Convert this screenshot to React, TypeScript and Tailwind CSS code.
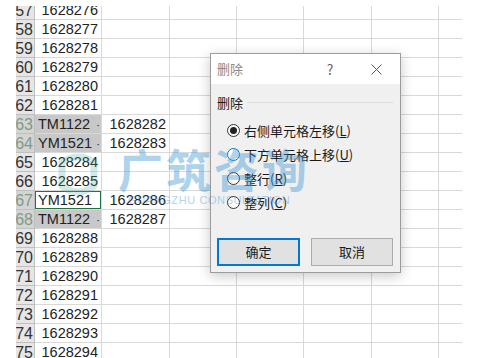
import clsx from "clsx";

type RowData = {
  n: number;
  a: string;
  b?: string;
  kind?: "gray" | "active";
};

const rows: RowData[] = [
  { n: 57, a: "1628276" },
  { n: 58, a: "1628277" },
  { n: 59, a: "1628278" },
  { n: 60, a: "1628279" },
  { n: 61, a: "1628280" },
  { n: 62, a: "1628281" },
  { n: 63, a: "TM1122", b: "1628282", kind: "gray" },
  { n: 64, a: "YM1521", b: "1628283", kind: "gray" },
  { n: 65, a: "1628284" },
  { n: 66, a: "1628285" },
  { n: 67, a: "YM1521", b: "1628286", kind: "active" },
  { n: 68, a: "TM1122", b: "1628287", kind: "gray" },
  { n: 69, a: "1628288" },
  { n: 70, a: "1628289" },
  { n: 71, a: "1628290" },
  { n: 72, a: "1628291" },
  { n: 73, a: "1628292" },
  { n: 74, a: "1628293" },
  { n: 75, a: "1628294" },
];

function SheetRow({ r }: { r: RowData }) {
  const marked = !!r.kind;
  const cell = "h-[19px] shrink-0 border-r border-b border-[#d9d9d9]";
  return (
    <div className="flex h-[19px]">
      {/* row header, clipped at the left */}
      <div
        className={clsx(
          "w-[19px] h-[19px] shrink-0 overflow-hidden flex items-center justify-end pr-[1px] pt-[2px] border-r border-b border-[#bfbfbf] text-[16px] whitespace-nowrap",
          marked ? "bg-[#d4d4d4] text-[#7f9b88]" : "bg-[#e6e6e6] text-[#333]"
        )}
      >
        {r.n}
      </div>

      {/* column A */}
      {r.kind ? (
        <div
          className={clsx(
            cell,
            "w-[67px] flex items-center pl-[3px] pr-[1px] pt-[2px]",
            r.kind === "gray" && "bg-[#c8c8c8]",
            r.kind === "active" && "ring-1 ring-inset ring-[#217346]"
          )}
        >
          <span>{r.a}</span>
          {r.kind === "gray" && <span className="ml-auto text-[11px] leading-none">·</span>}
        </div>
      ) : (
        <div className={clsx(cell, "w-[67px] flex items-center justify-end pr-[3px] pt-[2px]")}>
          {r.a}
        </div>
      )}

      {/* column B */}
      <div className={clsx(cell, "w-[68px] flex items-center justify-end pr-[3px] pt-[2px]")}>
        {r.b}
      </div>

      <div className={clsx(cell, "w-[67px]")} />
      <div className={clsx(cell, "w-[67px]")} />
      <div className={clsx(cell, "w-[68px]")} />
      <div className={clsx(cell, "w-[67px]")} />
      <div className="h-[19px] w-[23px] shrink-0 border-b border-[#d9d9d9]" />
    </div>
  );
}

function Radio({
  label,
  hotkey,
  checked,
  focus,
}: {
  label: string;
  hotkey: string;
  checked?: boolean;
  focus?: boolean;
}) {
  return (
    <div className="flex items-center h-[24px] gap-[4px]">
      <span
        className={clsx(
          "w-[13px] h-[13px] rounded-full border bg-white flex items-center justify-center shrink-0",
          focus ? "border-[#0078d7]" : "border-[#333]"
        )}
      >
        {checked && <span className="w-[7px] h-[7px] rounded-full bg-[#222]" />}
      </span>
      <span className="text-[13px] leading-none text-[#1a1a1a] whitespace-nowrap">
        {label}(<u>{hotkey}</u>)
      </span>
    </div>
  );
}

function DeleteDialog() {
  return (
    <div className="absolute left-[210px] top-[53px] w-[191px] h-[220px] flex flex-col border border-[#9c9c9c] bg-[#f0f0f0] shadow-[0_3px_12px_rgba(0,0,0,0.22)] font-['Noto_Sans_CJK_SC',sans-serif]">
      {/* Title bar */}
      <div className="h-[30px] bg-white flex items-center pl-[6px] pr-[1px]">
        <span className="text-[13px] text-[#8a8a8a]">删除</span>
        <span className="ml-auto w-[46px] h-[30px] flex items-center justify-center text-[14px] text-[#666]">
          ?
        </span>
        <span className="w-[46px] h-[30px] flex items-center justify-center">
          <svg width="11" height="11" viewBox="0 0 11 11" fill="none" stroke="#555" strokeWidth="1">
            <path d="M0.5 0.5L10.5 10.5M10.5 0.5L0.5 10.5" />
          </svg>
        </span>
      </div>

      {/* Body */}
      <div className="flex-1 pt-[10px] pl-[6px] pr-[7px]">
        <div className="flex items-center h-[16px] gap-[4px]">
          <span className="text-[13px] leading-none text-[#1a1a1a]">删除</span>
          <span className="flex-1 h-px bg-[#dcdcdc]" />
        </div>

        <div className="mt-[8px] pl-[10px]">
          <Radio label="右侧单元格左移" hotkey="L" checked />
          <Radio label="下方单元格上移" hotkey="U" focus />
          <Radio label="整行" hotkey="R" />
          <Radio label="整列" hotkey="C" />
        </div>

        <div className="mt-[24px] flex gap-[11px]">
          <button className="w-[83px] h-[28px] border-2 border-[#0078d7] bg-[#e1e1e1] text-[13px] text-[#1a1a1a]">
            确定
          </button>
          <button className="w-[82px] h-[28px] border border-[#adadad] bg-[#e1e1e1] text-[13px] text-[#1a1a1a]">
            取消
          </button>
        </div>
      </div>
    </div>
  );
}

function Watermark() {
  return (
    <div className="pointer-events-none absolute inset-0">
      <svg
        className="absolute left-[54px] top-[150px] opacity-[0.25]"
        width="48"
        height="50"
        viewBox="0 0 48 50"
        fill="none"
      >
        <path
          d="M8 12 Q24 2 40 12 L40 36 Q24 48 8 36 Z"
          stroke="#4fae9a"
          strokeWidth="7"
          strokeLinejoin="round"
        />
      </svg>
      <div className="absolute left-[118px] top-[146px] text-[45px] leading-none font-bold tracking-[3px] text-[#3d97d6] opacity-[0.42] font-['Noto_Sans_CJK_SC',sans-serif] whitespace-nowrap">
        广筑咨询
      </div>
      <div className="absolute left-[128px] top-[195px] text-[11px] leading-none tracking-[0.6px] text-[#3d97d6] opacity-[0.4] font-['Liberation_Sans',sans-serif] whitespace-nowrap">
        GUANGZHU CONSULTATION
      </div>
    </div>
  );
}

export default function App() {
  return (
    <div className="relative w-[480px] h-[358px] overflow-hidden bg-white text-[#222] text-[14.5px] font-['Liberation_Sans','Noto_Sans_CJK_SC',sans-serif]">
      <div className="ml-[16px] mt-[6px] h-[352px] w-[446px] overflow-hidden">
        <div className="-mt-[5px]">
          {rows.map((r) => (
            <SheetRow key={r.n} r={r} />
          ))}
        </div>
      </div>
      <DeleteDialog />
      <Watermark />
    </div>
  );
}
